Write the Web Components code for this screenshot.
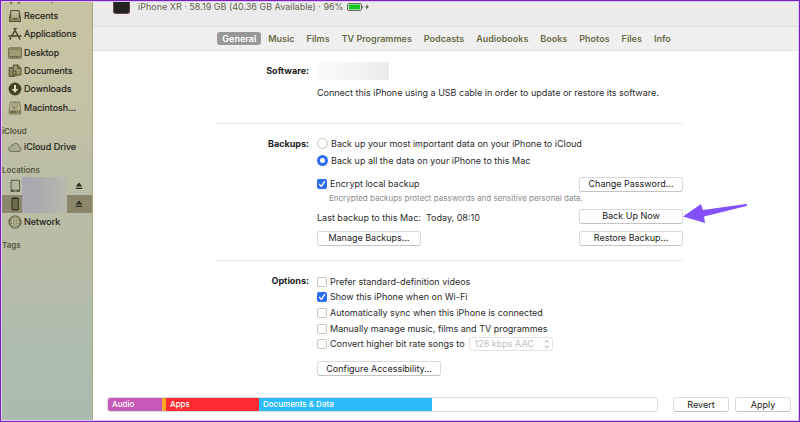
<!DOCTYPE html>
<html lang="en-GB">
<head>
<meta charset="utf-8">
<title>iPhone XR</title>
<style>
html,body{margin:0;height:100%}
body{font:9px/14px Inter,"Liberation Sans",sans-serif;color:#2b2b2b;background:#fff}
</style>
</head>
<body>
<device-window>
  <finder-sidebar slot="sidebar">
    <side-item icon="airdrop" slot="top">AirDrop</side-item>
    <side-group slot="favourites" tall>
      <side-item icon="recents">Recents</side-item>
      <side-item icon="apps">Applications</side-item>
      <side-item icon="desktop">Desktop</side-item>
      <side-item icon="docs">Documents</side-item>
      <side-item icon="downloads">Downloads</side-item>
      <side-item icon="disk">Macintosh…</side-item>
    </side-group>
    <side-group heading="iCloud">
      <side-item icon="cloud">iCloud Drive</side-item>
    </side-group>
    <side-group heading="Locations">
      <side-item icon="tablet" device></side-item>
      <side-item icon="phone" device selected></side-item>
      <side-item icon="network">Network</side-item>
    </side-group>
    <side-group heading="Tags"></side-group>
  </finder-sidebar>

  <device-header slot="header">iPhone XR · 58.19 GB (40.36 GB Available) · 96%</device-header>
  <tab-bar slot="header" items="General,Music,Films,TV Programmes,Podcasts,Audiobooks,Books,Photos,Files,Info"></tab-bar>

  <settings-section heading="Software:">
    <software-info>Connect this iPhone using a USB cable in order to update or restore its software.</software-info>
  </settings-section>

  <settings-section heading="Backups:">
    <backup-target></backup-target>
    <form-row>
      <check-option checked>Encrypt local backup</check-option>
      <push-button slot="end">Change Password…</push-button>
    </form-row>
    <form-note>Encrypted backups protect passwords and sensitive personal data.</form-note>
    <form-row low>
      <span>Last backup to this Mac:&nbsp; Today, 08:10</span>
      <push-button slot="end" pointed>Back Up Now</push-button>
    </form-row>
    <form-row>
      <push-button>Manage Backups…</push-button>
      <push-button slot="end">Restore Backup…</push-button>
    </form-row>
  </settings-section>

  <settings-section heading="Options:">
    <option-list>
      <check-option>Prefer standard-definition videos</check-option>
      <check-option checked>Show this iPhone when on Wi-Fi</check-option>
      <check-option>Automatically sync when this iPhone is connected</check-option>
      <check-option>Manually manage music, films and TV programmes</check-option>
      <check-option>Convert higher bit rate songs to<rate-select slot="after"></rate-select></check-option>
      <push-button wide slot="foot">Configure Accessibility…</push-button>
    </option-list>
  </settings-section>

  <storage-bar slot="footer"></storage-bar>
  <push-button slot="footer" small>Revert</push-button>
  <push-button slot="footer" small>Apply</push-button>
</device-window>

<script>
const define = (name, render) => customElements.define(name, class extends HTMLElement {
  connectedCallback() {
    if (this.shadowRoot) return;
    const t = document.createElement('template');
    t.innerHTML = '<style>*{box-sizing:border-box}:host{display:block;box-sizing:border-box}</style>' + render(this);
    this.attachShadow({mode: 'open'}).append(t.content.cloneNode(true));
  }
});

const icons = {
  airdrop: '<path d="M4 12.500a5.500 5.500 0 1 1 6 0M5.500 9.500a2.500 2.500 0 1 1 3 0" fill="none" stroke="currentColor" stroke-width="1.300"/>',
  recents: '<path d="M2.600 1h8.800l1.600 8v4H1V9z" fill="#55532f"/><rect x="3.200" y="2" width="7.600" height="7" rx=".6" fill="#aeab86"/><path d="M3.500 3.500h7M3.400 5.200h7.200" stroke="#d1cda9" stroke-width=".7"/><path d="M1.800 9h2.700l.9 1.300h3.200l.9-1.300h2.700v3H1.800z" fill="#8b8860"/>',
  apps: '<g stroke="currentColor" stroke-width="1.500" stroke-linecap="round" fill="none"><path d="M6 1.500l5.800 10.500M8 1.500L3.800 9M1 9h7.600M11 9h2M2.800 10.800l-.7 1.200"/></g>',
  desktop: '<rect x=".6" y="1.800" width="12.800" height="10.400" rx="1" fill="#a09d75" stroke="#6a6844" stroke-width=".9"/><path d="M1 3.300h12" stroke="#7d7a55" stroke-width=".9"/><path d="M2 10.700h10" stroke="#55532f" stroke-width="1.300" stroke-dasharray="1.300 .6"/>',
  docs: '<path d="M1 3.500h5.500v9H1z" fill="#79764f" stroke="#55532f" stroke-width=".8"/><path d="M5.200 1h4.600L13 4.200V11H5.200z" fill="#9b9870" stroke="#55532f" stroke-width="1"/><path d="M9.500 1v3.400H13M5.200 7H8v5.500" stroke="#55532f" stroke-width="1" fill="none"/><path d="M2 6h2.500M2 8h2.500M2 10h2.500" stroke="#b8b48c" stroke-width=".7"/>',
  downloads: '<circle cx="7" cy="7" r="6.400" fill="currentColor"/><path d="M7 3v5" stroke="#e1dfbd" stroke-width="2"/><path d="M3.700 7h6.600L7 10.800z" fill="#e1dfbd"/>',
  disk: '<path d="M2.500 1h9l1.300 8v4H1.200V9z" fill="#bdb994" stroke="#6d6a48" stroke-width=".8"/><ellipse cx="7" cy="4.800" rx="3" ry="3" fill="#aeab86" stroke="#777451" stroke-width=".5"/><path d="M7 4.800L5 8" stroke="#5d5b3b" stroke-width=".8"/><path d="M1.500 9h11v3.600h-11z" fill="#8e8b65"/><path d="M2.500 11h5.500M10.800 11h1" stroke="#55532f" stroke-width="1"/>',
  cloud: '<path d="M3.500 11.500a2.600 2.600 0 0 1-.3-5.200 1.900 1.900 0 0 1 2-1.700 3.400 3.400 0 0 1 6 2A2.500 2.500 0 0 1 11 11.500z" fill="#aaac92" stroke="#696b53" stroke-width=".9"/>',
  tablet: '<rect x="2.600" y=".7" width="9.300" height="12.300" rx="1.200" fill="#4f4f41"/><rect x="3.500" y="1.700" width="7.500" height="9" fill="#b4b69f"/><path d="M5.800 12h3" stroke="#c6c8b4" stroke-width=".9"/>',
  phone: '<rect x="3.500" y=".6" width="7.300" height="12.800" rx="1.400" fill="#34331f"/><rect x="4.500" y="1.900" width="5.300" height="10.200" fill="#6e6c4f"/><path d="M6 1.500h2.500" stroke="#111" stroke-width=".8"/>',
  network: '<circle cx="7" cy="7" r="6.200" fill="#7a7956"/><g fill="none" stroke="#bfc2a7" stroke-width=".9"><ellipse cx="7" cy="7" rx="2.800" ry="5.400"/><path d="M7 1.500v11M1.500 7h11M2.600 3.700c2.500 1.600 6.300 1.600 8.800 0M2.600 10.300c2.500-1.600 6.300-1.600 8.800 0"/></g><circle cx="7" cy="7" r="6.200" fill="none" stroke="#5b5a37" stroke-width=".8"/>'
};

define('device-window', () => `<style>
  :host{display:grid;grid-template-columns:92px 1fr;min-height:100vh;border:1px solid #7424bd;outline:1px solid #e2c4ff;outline-offset:-2px}
  main{display:flex;flex-direction:column;min-width:0}
  header{background:#ededec}
  .body{padding:0 24px 0 32px;display:grid;justify-items:center}
  .sections{width:100%;max-width:466px}
  footer{margin-top:auto;padding:4px 8px 9px 14px;display:flex;align-items:center;gap:6px}
  </style>
  <slot name="sidebar"></slot>
  <main><header><slot name="header"></slot></header>
  <div class="body"><div class="sections"><slot></slot></div></div>
  <footer><slot name="footer"></slot></footer></main>`);

define('finder-sidebar', () => `<style>
  :host{background:linear-gradient(#c7c3a0 0,#c5c3a5 20%,#bcbea5 40%,#b8bda7 60%,#acbdae 85%,#a9bcae);border-right:1px solid #a9a687;color:#24241a}
  .top{height:6px;overflow:hidden;display:flex;align-items:flex-end}
  nav{display:flex;flex-direction:column}
  </style><nav aria-label="Sidebar"><div class="top"><slot name="top"></slot></div><slot name="favourites"></slot><slot></slot></nav>`);

define('side-group', el => `<style>
  :host{padding-bottom:5px}
  h2{margin:0;padding:2px 1px 0;font-size:8px;line-height:14px;font-weight:600;color:#55563f}
  .list{display:grid;grid-auto-rows:18px}
  :host([tall]) .list{grid-auto-rows:1fr;align-items:center;height:110px}
  </style>${el.getAttribute('heading') ? `<h2>${el.getAttribute('heading')}</h2>` : ''}<div class="list"><slot></slot></div>`);

define('side-item', el => `<style>
  :host([selected]){background:#8a876b}
  .item{display:grid;grid-template-columns:14px 1fr auto;align-items:center;gap:2px;padding-left:7px;height:18px}
  svg{display:block;color:#46441f}
  a{color:inherit;text-decoration:none;line-height:18px;-webkit-text-stroke:.2px}
  .hidden-name{height:18px;width:45px;margin-left:-2px;background:linear-gradient(90deg,#a9a7b1,#acabad 40%,#b9baad)}
  button{border:0;background:none;padding:0;margin-right:8px;width:10px;height:10px}
  button svg{color:#2c2b1c}
  </style><div class="item"><svg width="14" height="14" viewBox="0 0 14 14" aria-hidden="true">${icons[el.getAttribute('icon')]}</svg>
  ${el.hasAttribute('device') ? `<div class="hidden-name"></div><button aria-label="Eject"><svg width="10" height="10" viewBox="0 0 10 10"><path d="M5 1.500L8.300 5.500H1.700zM1.900 6.700h6.200v1.300H1.900z" fill="currentColor"/></svg></button>` : '<a href="#"><slot></slot></a>'}</div>`);

define('device-header', () => `<style>
  :host{display:flex;align-items:flex-start;height:26px;padding:0 20px;gap:8px;border-bottom:1px solid #dfdfd4;color:#64654c;background:#ebebeb;line-height:11px}
  .thumb{width:17px;height:13px;background:#232323;border:1px solid #63463e;border-top:0;border-radius:0 0 3px 3px}
  .info{display:flex;align-items:center;gap:4px}
  </style><div class="thumb"></div><div class="info"><slot></slot>
  <svg width="24" height="8" viewBox="0 0 24 8" role="img" aria-label="Charging"><rect x=".5" y=".5" width="14" height="7" rx="1.500" fill="#f4f6ee" stroke="#6d7060"/><rect x="1.800" y="1.500" width="11.400" height="5" fill="#11c61e"/><path d="M15.700 2.800v2.400" stroke="#6d7060"/><path d="M20.500 1l-2.300 3.500h1.700L19 7l3-3.700h-1.700z" fill="#4d4e3c"/></svg></div>`);

define('tab-bar', el => `<style>
  :host{border-bottom:1px solid #e3e3e0;background:#efefef}
  nav{display:flex;justify-content:center;align-items:center;gap:2px;height:23px;padding-left:1px}
  button{font:600 9px/13px Inter,"Liberation Sans",sans-serif;color:#6b6b47;border:0;background:none;padding:0 5px;border-radius:3px;white-space:nowrap}
  button[aria-selected=true]{background:#999;color:#fff}
  </style><nav role="tablist">${el.getAttribute('items').split(',').map((t, i) => `<button role="tab" aria-selected="${!i}">${t}</button>`).join('')}</nav>`);

define('settings-section', el => `<style>
  :host{padding:11px 0 14px;border-bottom:1px solid #e6e6e6}
  :host(:last-of-type){border:0}
  section{display:grid;grid-template-columns:92px 1fr;gap:8px}
  h2{margin:0;font-size:9px;line-height:18px;font-weight:700;text-align:right;color:#222}
  </style><section><h2>${el.getAttribute('heading')}</h2><div><slot></slot></div></section>`);

define('software-info', () => `<style>
  :host{padding-bottom:9px}
  .version{width:72px;height:18px;margin-bottom:6px;background:linear-gradient(100deg,#fbfbfb,#f3f3f3 60%,#eaeaea)}
  p{margin:0;white-space:nowrap}
  </style><div class="version"></div><p><slot></slot></p>`);

define('backup-target', () => `<style>
  label{display:flex;align-items:center;gap:3px;height:17px}
  input{appearance:none;margin:0;width:11px;height:11px;border:1px solid #c3c3aa;border-radius:50%;background:#fff}
  input:checked{border:0;background:radial-gradient(circle,#fff 0 2px,#2c6df0 3px)}
  :host{padding-bottom:7px}
  </style><div role="radiogroup" aria-label="Backups">
  <label><input type="radio" name="target">Back up your most important data on your iPhone to iCloud</label>
  <label><input type="radio" name="target" checked>Back up all the data on your iPhone to this Mac</label></div>`);

define('form-row', () => `<style>
  :host{display:flex;align-items:center;justify-content:space-between;height:16px}
  :host([low]){margin:4px 0 6px}
  .start{display:flex;align-items:center}
  :host([low]) .start{align-self:flex-end;line-height:12px}
  </style><div class="start"><slot></slot></div><slot name="end"></slot>`);

define('form-note', () => `<style>
  :host{padding-left:12px;height:12px;font-size:8px;line-height:12px;color:#8b8b8b;white-space:nowrap}
  </style><slot></slot>`);

define('check-option', el => `<style>
  :host{display:flex;align-items:center;gap:4px}
  label{display:flex;align-items:center;gap:3px;white-space:nowrap}
  input{appearance:none;margin:0;width:10px;height:10px;border:1px solid #c9c9b4;border-radius:2px;background:#fff}
  .box{display:grid}
  .box>*{grid-area:1/1}
  input:checked{border:0;background:#2c6df0}
  svg{display:none;pointer-events:none}
  input:checked+svg{display:block}
  </style><label><span class="box"><input type="checkbox"${el.hasAttribute('checked') ? ' checked' : ''}><svg width="10" height="10" viewBox="0 0 10 10"><path d="M2.500 5.300L4.300 7.400 7.600 2.600" fill="none" stroke="#fff" stroke-width="1.300" stroke-linecap="round"/></svg></span><slot></slot></label><slot name="after"></slot>`);

define('rate-select', () => `<style>
  .wrap{display:grid;align-items:center}
  .wrap>*{grid-area:1/1}
  select{appearance:none;font:9px/12px Inter,"Liberation Sans",sans-serif;color:#bdbdbd;width:84px;height:14px;padding:0 5px;border:1px solid #e4e4df;border-radius:3px;background:#fff;opacity:1}
  svg{justify-self:end;margin-right:3px;pointer-events:none}
  </style><div class="wrap"><select disabled aria-label="Bit rate"><option>128 kbps AAC</option></select>
  <svg width="6" height="10" viewBox="0 0 6 10"><path d="M1 3.500L3 1.300l2 2.200M1 6.500l2 2.200 2-2.200" fill="none" stroke="#9a9a9a" stroke-width="1"/></svg></div>`);

define('option-list', () => `<style>
  :host{padding-top:2px}
  .options{display:grid;grid-template-rows:repeat(5,1fr);height:78px;margin-bottom:9px}
  </style><div class="options"><slot></slot></div><slot name="foot"></slot>`);

define('push-button', el => `<style>
  :host{position:relative;width:104px;flex:none}
  :host([wide]){width:124px}
  :host([small]){width:56px}
  button{display:block;width:100%;height:15px;padding:0;border:1px solid #dadada;border-bottom-color:#c4c4c4;border-radius:3px;background:#fff;font:9px/12px Inter,"Liberation Sans",sans-serif;color:#222}
  svg{position:absolute;left:100%;top:-6px;pointer-events:none}
  </style><button type="button"><slot></slot></button>${el.hasAttribute('pointed') ? '<svg width="65" height="24" viewBox="0 0 65 24"><path d="M0 13.500L18 1 20 7 63 1Q65 1.500 63.500 3L21 13.500 22 20z" fill="#8450fa"/></svg>' : ''}`);

define('storage-bar', () => `<style>
  :host{flex:1;min-width:0;margin-right:9px}
  .bar{display:grid;grid-template-columns:54fr 4fr 93fr 173fr 225fr;height:15px;border:1px solid #dcdcdc;border-radius:3px;overflow:hidden;color:#fff;font-size:8px;line-height:13px;font-weight:500}
  .bar>*{padding-left:4px;white-space:nowrap;min-width:0}
  .bar>.other,.bar>.free{padding:0}
  .audio{background:#c659b8}.other{background:#f7a823}.apps{background:#fe2a30}.docs{background:#2cbcfc}
  </style><div class="bar"><span class="audio">Audio</span><span class="other"></span><span class="apps">Apps</span><span class="docs">Documents &amp; Data</span><span class="free"></span></div>`);
</script>
</body>
</html>
